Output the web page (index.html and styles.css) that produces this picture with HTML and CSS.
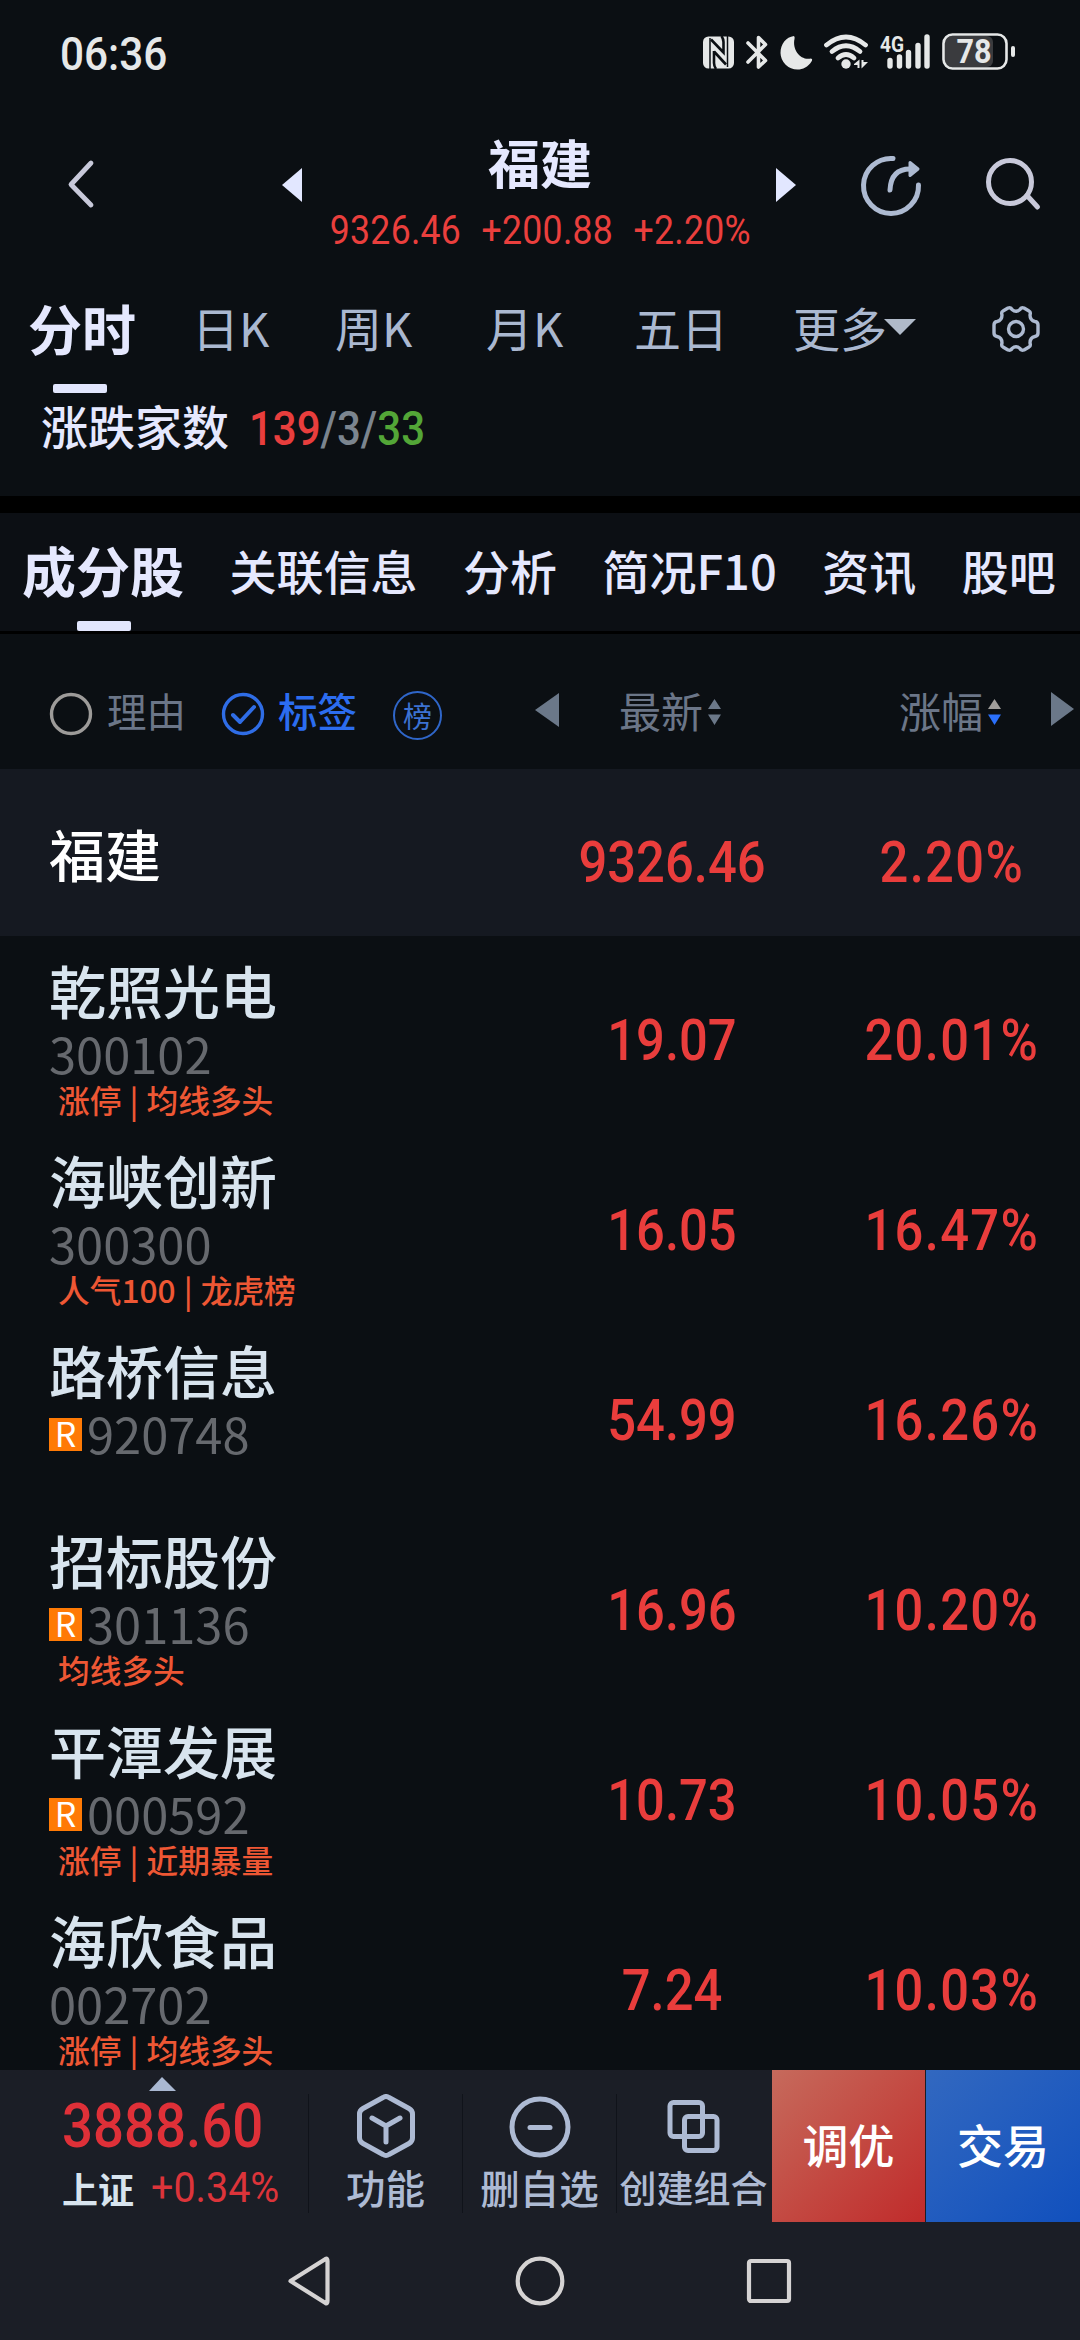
FILE: index.html
```html
<!DOCTYPE html>
<html lang="zh-CN">
<head>
    <meta charset="UTF-8">
    <meta name="viewport" content="width=device-width, initial-scale=1.0">
    <title>福建 - 成分股</title>
    <link rel="stylesheet" href="styles.css">
</head>
<body>
    <!-- 状态栏 -->
    <div class="status-bar">
        <span class="clock num">06:36</span>
        <svg class="status-icons" width="320" height="44" viewBox="700 30 320 44" fill="#e6e8e8">
            <!-- NFC -->
            <rect x="703" y="36.500" width="31" height="32" rx="5.500"/>
            <g fill="none" stroke="#0b0f13">
                <path d="M710 38V69M727.500 36V67" stroke-width="1.500"/>
                <path d="M711 39.500L723.500 52.500V42Q723.500 39 721.500 36" stroke-width="2.600"/>
                <path d="M714 51.500L726 64.500M714 51V63Q714 66 716 69" stroke-width="2.600"/>
            </g>
            <!-- 蓝牙 -->
            <path d="M748 43L765.500 60.500L758.500 67V37.500L765.500 44.500L748 62" fill="none" stroke="#e6e8e8" stroke-width="3.600" stroke-linejoin="round" stroke-linecap="round"/>
            <!-- 勿扰 -->
            <path d="M794 36Q795 37 794.500 39C792 50 801 61 811 58.500Q813 59 811.500 61.500C808 67 803 69.500 797.500 69.500A17 17 0 0 1 780.500 53C780.500 44 786 37 794 36Z"/>
            <!-- WiFi -->
            <g fill="none" stroke="#e6e8e8" stroke-width="4.800" stroke-linecap="round">
                <path d="M826.500 45Q846 29 865.500 45"/>
                <path d="M832 51.500Q846 40 860 51.500"/>
                <path d="M838 58Q846 51 854 58"/>
            </g>
            <circle cx="846" cy="64" r="4.700"/>
            <path d="M854 64L859.500 59.500V68H857.500V65H854ZM861.500 60H863.500V62H868L861.500 68.500Z"/>
            <!-- 信号 -->
            <text class="net" x="880" y="51.500" textLength="24" lengthAdjust="spacingAndGlyphs">4G</text>
            <g stroke="#e6e8e8" stroke-width="5.400" stroke-linecap="round">
                <path d="M890 60.500V66M899.500 57V66M908.500 52.500V66M918 45.500V66M927 37V66"/>
            </g>
            <!-- 电量 -->
            <rect x="945" y="36" width="48" height="31" rx="6" fill="#3a3b3e"/>
            <rect x="943.500" y="34.500" width="63" height="34" rx="9" fill="none" stroke="#e6e8e8" stroke-width="2.600"/>
            <rect x="1011" y="46" width="4" height="11" rx="2"/>
            <text class="battery" x="956.500" y="63" textLength="35" lengthAdjust="spacingAndGlyphs">78</text>
        </svg>
    </div>

    <!-- 标题栏 -->
    <header class="header">
        <svg class="back" width="40" height="56" viewBox="0 0 40 56"><path d="M29 7L9 28.500L29 49" fill="none" stroke="#c8c9da" stroke-width="4.800" stroke-linecap="round" stroke-linejoin="round"/></svg>
        <svg class="prev" width="20" height="34" viewBox="0 0 20 34"><path d="M0 17L20 0V34Z" fill="#e2e7ff"/></svg>
        <div class="title-box">
            <h1>福建</h1>
            <p class="quote num"><span>9326.46</span><span>+200.88</span><span>+2.20%</span></p>
        </div>
        <svg class="next" width="20" height="34" viewBox="0 0 20 34"><path d="M20 17L0 0V34Z" fill="#e2e7ff"/></svg>
        <svg class="share" width="64" height="64" viewBox="0 0 64 64" fill="none" stroke="#adbad1" stroke-width="5" stroke-linecap="round">
            <path d="M34 4.500A27.500 27.500 0 1 0 59.500 31"/>
            <path d="M31 36Q32 15 51 15"/>
            <path d="M51 8.500L59 15L51 21.500Z" fill="#adbad1" stroke-width="3" stroke-linejoin="round"/>
        </svg>
        <svg class="search" width="60" height="60" viewBox="0 0 60 60" fill="none" stroke="#c8c9da" stroke-width="5" stroke-linecap="round">
            <circle cx="27" cy="26" r="21.500"/>
            <path d="M44 39.500L54.500 51"/>
        </svg>
    </header>

    <!-- 周期 -->
    <nav class="period">
        <a class="active">分时</a>
        <a class="day">日K</a>
        <a class="week">周K</a>
        <a class="month">月K</a>
        <a class="five">五日</a>
        <a class="more">更多<svg width="32" height="16" viewBox="0 0 32 16"><path d="M0 0H32L16 16Z" fill="#b0bac9"/></svg></a>
        <svg class="gear" width="50" height="50" viewBox="-25 -25 50 50" fill="none" stroke="#adbad1" stroke-width="3.400" stroke-linejoin="round">
            <path d="M-8 -21Q-5 -22 -4 -19.500Q0 -16 4 -19.500Q5 -22 8 -21L13 -18Q15 -17 14 -14Q14 -8.500 19 -7.500Q22 -7 22 -4V4Q22 7 19 7.500Q14 8.500 14 14Q15 17 13 18L8 21Q5 22 4 19.500Q0 16 -4 19.500Q-5 22 -8 21L-13 18Q-15 17 -14 14Q-14 8.500 -19 7.500Q-22 7 -22 4V-4Q-22 -7 -19 -7.500Q-14 -8.500 -14 -14Q-15 -17 -13 -18Z"/>
            <circle r="7.500"/>
        </svg>
    </nav>

    <div class="updown">
        <span class="updown-label">涨跌家数</span>
        <span class="num counts"><b class="red">139</b><i>/3/</i><b class="green">33</b></span>
    </div>

    <!-- 板块标签 -->
    <nav class="tabs">
        <a class="active">成分股</a>
        <a>关联信息</a>
        <a>分析</a>
        <a>简况F10</a>
        <a>资讯</a>
        <a>股吧</a>
    </nav>

    <!-- 表头 -->
    <div class="table-head">
        <div class="filters">
            <svg width="44" height="44" viewBox="0 0 44 44"><circle cx="22" cy="22" r="19.500" fill="none" stroke="#9d9b99" stroke-width="3.400"/></svg>
            <span class="reason">理由</span>
            <svg width="44" height="44" viewBox="0 0 44 44" fill="none" stroke="#2f6de6" stroke-width="3.400" stroke-linecap="round" stroke-linejoin="round"><circle cx="22" cy="22" r="19.500"/><path d="M12 23L19 30L33 15" stroke-width="4"/></svg>
            <span class="label">标签</span>
            <span class="rank">榜</span>
            <svg class="scroll-left" width="24" height="34" viewBox="0 0 24 34"><path d="M0 17L24 0V34Z" fill="#6b7889"/></svg>
        </div>
        <div class="sort">最新<svg width="13" height="26" viewBox="0 0 13 26"><path d="M0 10L6.500 0L13 10ZM0 15.500H13L6.500 26Z" fill="#6b7889"/></svg></div>
        <div class="sort">涨幅<svg width="13" height="26" viewBox="0 0 13 26"><path d="M0 10L6.500 0L13 10Z" fill="#a09d9a"/><path d="M0 15.500H13L6.500 26Z" fill="#2b70fb"/></svg></div>
        <svg class="scroll-right" width="23" height="34" viewBox="0 0 23 34"><path d="M23 17L0 0V34Z" fill="#6b7889"/></svg>
    </div>

    <main class="list">
        <div class="row board">
            <div class="stock"><div class="name">福建</div></div>
            <div class="num price">9326.46</div>
            <div class="num price">2.20%</div>
        </div>
        <div class="row">
            <div class="stock">
                <div class="name">乾照光电</div>
                <div class="code">300102</div>
                <div class="tags">涨停 | 均线多头</div>
            </div>
            <div class="num price">19.07</div>
            <div class="num price">20.01%</div>
        </div>
        <div class="row">
            <div class="stock">
                <div class="name">海峡创新</div>
                <div class="code">300300</div>
                <div class="tags">人气100 | 龙虎榜</div>
            </div>
            <div class="num price">16.05</div>
            <div class="num price">16.47%</div>
        </div>
        <div class="row">
            <div class="stock">
                <div class="name">路桥信息</div>
                <div class="code"><span class="margin">R</span>920748</div>
            </div>
            <div class="num price">54.99</div>
            <div class="num price">16.26%</div>
        </div>
        <div class="row">
            <div class="stock">
                <div class="name">招标股份</div>
                <div class="code"><span class="margin">R</span>301136</div>
                <div class="tags">均线多头</div>
            </div>
            <div class="num price">16.96</div>
            <div class="num price">10.20%</div>
        </div>
        <div class="row">
            <div class="stock">
                <div class="name">平潭发展</div>
                <div class="code"><span class="margin">R</span>000592</div>
                <div class="tags">涨停 | 近期暴量</div>
            </div>
            <div class="num price">10.73</div>
            <div class="num price">10.05%</div>
        </div>
        <div class="row">
            <div class="stock">
                <div class="name">海欣食品</div>
                <div class="code">002702</div>
                <div class="tags">涨停 | 均线多头</div>
            </div>
            <div class="num price">7.24</div>
            <div class="num price">10.03%</div>
        </div>
    </main>

    <!-- 底部工具栏 -->
    <footer class="toolbar">
        <div class="index">
            <svg width="27" height="14" viewBox="0 0 27 14"><path d="M0 14L13 0L27 14Z" fill="#aab8d2"/></svg>
            <div class="index-value num">3888.60</div>
            <div class="index-info"><b>上证</b><span class="num">+0.34%</span></div>
        </div>
        <div class="tool">
            <svg width="66" height="66" viewBox="0 0 66 66" fill="none" stroke="#adbad3" stroke-width="5" stroke-linecap="round" stroke-linejoin="round">
                <path d="M30 3.500Q33 1.500 36 3.500L56 14.500Q59.500 16.500 59.500 20V44Q59.500 47.500 56 49.500L36 60.500Q33 62.500 30 60.500L10 49.500Q6.500 47.500 6.500 44V20Q6.500 16.500 10 14.500Z"/>
                <path d="M19 24L33 32L47 24M33 32V48"/>
            </svg>
            <span>功能</span>
        </div>
        <div class="tool">
            <svg width="66" height="66" viewBox="0 0 66 66" fill="none" stroke="#adbad3" stroke-width="5" stroke-linecap="round"><circle cx="33" cy="33" r="28"/><path d="M23 33.500H43"/></svg>
            <span>删自选</span>
        </div>
        <div class="tool small">
            <svg width="66" height="66" viewBox="0 0 66 66" fill="none" stroke="#adbad3" stroke-width="5"><rect x="9" y="8.500" width="32.500" height="34" rx="3.500"/><rect x="23.500" y="22.500" width="32.500" height="34" rx="3.500"/></svg>
            <span>创建组合</span>
        </div>
        <div class="btn optimize">调优</div>
        <div class="btn trade">交易</div>
    </footer>

    <!-- 系统导航键 -->
    <div class="sys-nav">
        <svg width="54" height="54" viewBox="0 0 54 54"><path d="M6.500 27L41.500 5Q43.500 4 43.500 7V47Q43.500 50 41.500 49Z" fill="none" stroke="#d5d3d3" stroke-width="4.200" stroke-linejoin="round"/></svg>
        <svg width="54" height="54" viewBox="0 0 54 54"><circle cx="27" cy="27" r="22.300" fill="none" stroke="#d5d3d3" stroke-width="4.200"/></svg>
        <svg width="54" height="54" viewBox="0 0 54 54"><rect x="7" y="7" width="40" height="40" rx="2" fill="none" stroke="#d5d3d3" stroke-width="4.200"/></svg>
    </div>
</body>
</html>
```
FILE: styles.css
```css
* {
    box-sizing: border-box;
}

body {
    margin: 0;
    width: 1080px;
    height: 2340px;
    overflow: hidden;
    background-color: #0b0f13;
    color: #e5e8fe;
    font-family: "Noto Sans CJK SC", sans-serif;
    display: flex;
    flex-direction: column;
}

h1, p {
    margin: 0;
}

svg {
    display: block;
    flex: none;
}

/* 窄体数字 */
.num {
    font-family: Roboto, sans-serif;
    font-weight: 500;
    transform: scaleX(0.89);
    white-space: nowrap;
}

.status-bar {
    height: 108px;
    padding: 30px 60px 0 60px;
    display: flex;
    justify-content: space-between;
}

.clock {
    font-size: 46px;
    line-height: 48px;
    color: #e6e8e8;
    transform-origin: left;
    transform: scaleX(0.92);
}

.net {
    font: 700 22px Roboto, sans-serif;
}

.battery {
    font: 700 34px Roboto, sans-serif;
}

/* 标题栏 */
.header {
    height: 172px;
    display: flex;
    padding-left: 62px;
}

.back {
    margin-top: 48px;
}

.prev {
    margin: 60px 0 0 180px;
}

.title-box {
    width: 474px;
    text-align: center;
}

.title-box h1 {
    margin: 24px 0 0 2px;
    font-size: 52px;
    line-height: 60px;
    font-weight: 700;
}

.quote {
    margin-top: 15px;
    font-size: 40px;
    line-height: 48px;
    letter-spacing: 0.300px;
    font-weight: 400;
    color: #ea3f3d;
    display: flex;
    justify-content: center;
    gap: 23px;
    padding-left: 3px;
}

.next {
    margin-top: 60px;
}

.share {
    margin: 46px 0 0 63px;
}

.search {
    margin: 48px 0 0 60px;
}

/* 周期 */
.period {
    height: 113px;
    padding: 14px 0 0 28px;
    display: flex;
    font-size: 47px;
    line-height: 66px;
    color: #aab8d0;
}

.period .active,
.tabs .active {
    font-size: 54px;
    font-weight: 700;
    color: #e5e8fe;
}

.period .active {
    width: 164px;
    line-height: 68px;
}

.period .active::after,
.tabs .active::after {
    content: "";
    display: block;
    width: 54px;
    height: 9px;
    border-radius: 2px;
    background-color: #e2e6fd;
}

.period .active::after {
    margin: 22px 0 0 25px;
}

.day {
    width: 143px;
}

.week {
    width: 151px;
}

.month {
    width: 148px;
}

.five {
    width: 159px;
}

.period .more {
    width: 198px;
    display: flex;
    align-items: center;
    height: 66px;
}

.period .more svg {
    margin-left: -3px;
}

.gear {
    margin-top: 10px;
}

.updown {
    height: 120px;
    padding-left: 41px;
    border-bottom: 17px solid #000;
    display: flex;
    font-size: 47px;
    line-height: 64px;
    font-weight: 500;
}

.counts {
    margin-left: 20px;
    font-size: 48px;
    line-height: 72px;
    transform-origin: left;
    transform: scaleX(0.875);
}

.counts b,
.counts i {
    font-style: normal;
    font-weight: 500;
}

.counts i {
    color: #7b858f;
}

.counts .red {
    color: #e83e3d;
}

.counts .green {
    color: #53a637;
}

/* 板块标签 */
.tabs {
    height: 121px;
    padding: 22px 0 0 22px;
    border-bottom: 3px solid #000;
    background-color: #0c0f14;
    display: flex;
    gap: 45.500px;
    font-size: 47px;
    line-height: 70px;
    font-weight: 500;
}

.tabs a {
    white-space: nowrap;
}

.tabs .active::after {
    margin: 16px 0 0 55px;
    height: 10px;
}

/* 表头 */
.table-head,
.row {
    display: grid;
    grid-template-columns: 532px 280px 1fr;
}

.table-head {
    height: 135px;
    grid-template-columns: 559px 280px 212px 1fr;
    align-items: center;
    padding-top: 14px;
    color: #6b7688;
}

.filters {
    display: flex;
    align-items: center;
    padding-left: 49px;
    margin-top: 10px;
    height: 60px;
    font-size: 39.500px;
    line-height: 60px;
}

.reason {
    margin: -8px 35px 0 14px;
}

.label {
    margin: -8px 36px 0 13px;
    color: #2c6df0;
    font-weight: 500;
}

.rank {
    width: 49px;
    height: 49px;
    margin-top: 4px;
    border: 2px solid #2f66c9;
    border-radius: 50%;
    color: #3c72d2;
    font-size: 29px;
    line-height: 44px;
    text-align: center;
}

.scroll-left {
    margin: -7px 0 0 auto;
}

.sort {
    display: flex;
    align-items: center;
    gap: 5px;
    padding: 2px 0 0 60px;
    font-size: 42px;
    line-height: 60px;
}

.sort svg {
    margin-top: 4px;
}

/* 成分股列表 */
.list {
    height: 1301px;
    overflow: hidden;
}

.row {
    height: 190px;
}

.board {
    height: 167px;
    background-color: #151921;
}

.stock {
    padding: 20px 0 0 49px;
}

.name {
    font-size: 57px;
    line-height: 66px;
    font-weight: 500;
    color: #d8e4ee;
}

.board .name {
    margin-top: 31px;
    font-size: 56px;
    color: #fff;
}

.code {
    display: flex;
    align-items: center;
    height: 60px;
    margin-top: 1px;
    font-size: 48.800px;
    line-height: 60px;
    color: #66696e;
}

.margin {
    width: 33px;
    height: 33px;
    margin: 3px 5px 0 0;
    background-color: #ff7a05;
    color: #fff;
    font-size: 34px;
    line-height: 30px;
    text-align: center;
}

.tags {
    padding-left: 9px;
    font-size: 31.700px;
    line-height: 32px;
    font-weight: 500;
    word-spacing: 1px;
    color: #ee5734;
    white-space: nowrap;
}

.price {
    margin-top: 71px;
    height: 68px;
    font-size: 57px;
    line-height: 68px;
    text-align: center;
    color: #e93d3c;
}

.price + .price {
    padding-left: 13px;
    letter-spacing: 1.500px;
}

.board .price {
    margin-top: 60px;
}

/* 底部工具栏 */
.toolbar {
    height: 152px;
    background-color: #1b1e26;
    display: flex;
}

.index {
    width: 308px;
    padding: 7px 0 0 62px;
}

.index svg {
    margin-left: 87px;
}

.index-value {
    margin-top: 1px;
    font-size: 61px;
    line-height: 68px;
    color: #df3038;
    transform-origin: left;
    transform: scaleX(0.895);
}

.index-info {
    display: flex;
    font-size: 36px;
    line-height: 57px;
    color: #d8e4ee;
}

.index-info .num {
    margin-left: 17px;
    font-size: 42px;
    font-weight: 400;
    line-height: 56px;
    color: #dc343a;
    transform-origin: left;
    transform: scaleX(0.94);
}

.tool {
    width: 154px;
    height: 119px;
    margin-top: 24px;
    border-left: 1px solid #10131a;
    display: flex;
    flex-direction: column;
    align-items: center;
    font-size: 39.500px;
    line-height: 48px;
    font-weight: 500;
    color: #adbad3;
    white-space: nowrap;
}

.tool span {
    margin-top: 3px;
}

.small {
    font-size: 37px;
}

.btn {
    width: 153px;
    height: 152px;
    margin-left: 1px;
    font-size: 46px;
    line-height: 147px;
    font-weight: 500;
    text-align: center;
    color: #fff;
}

.optimize {
    margin-left: 2px;
    background: linear-gradient(135deg, #c66a5c, #c34740 55%, #c02b2b);
}

.trade {
    width: 154px;
    background: linear-gradient(135deg, #3268c0, #1150bd);
}

/* 系统导航键 */
.sys-nav {
    flex: 1;
    background-color: #1b1e26;
    display: flex;
    justify-content: center;
    align-items: center;
    gap: 175px;
}
```
